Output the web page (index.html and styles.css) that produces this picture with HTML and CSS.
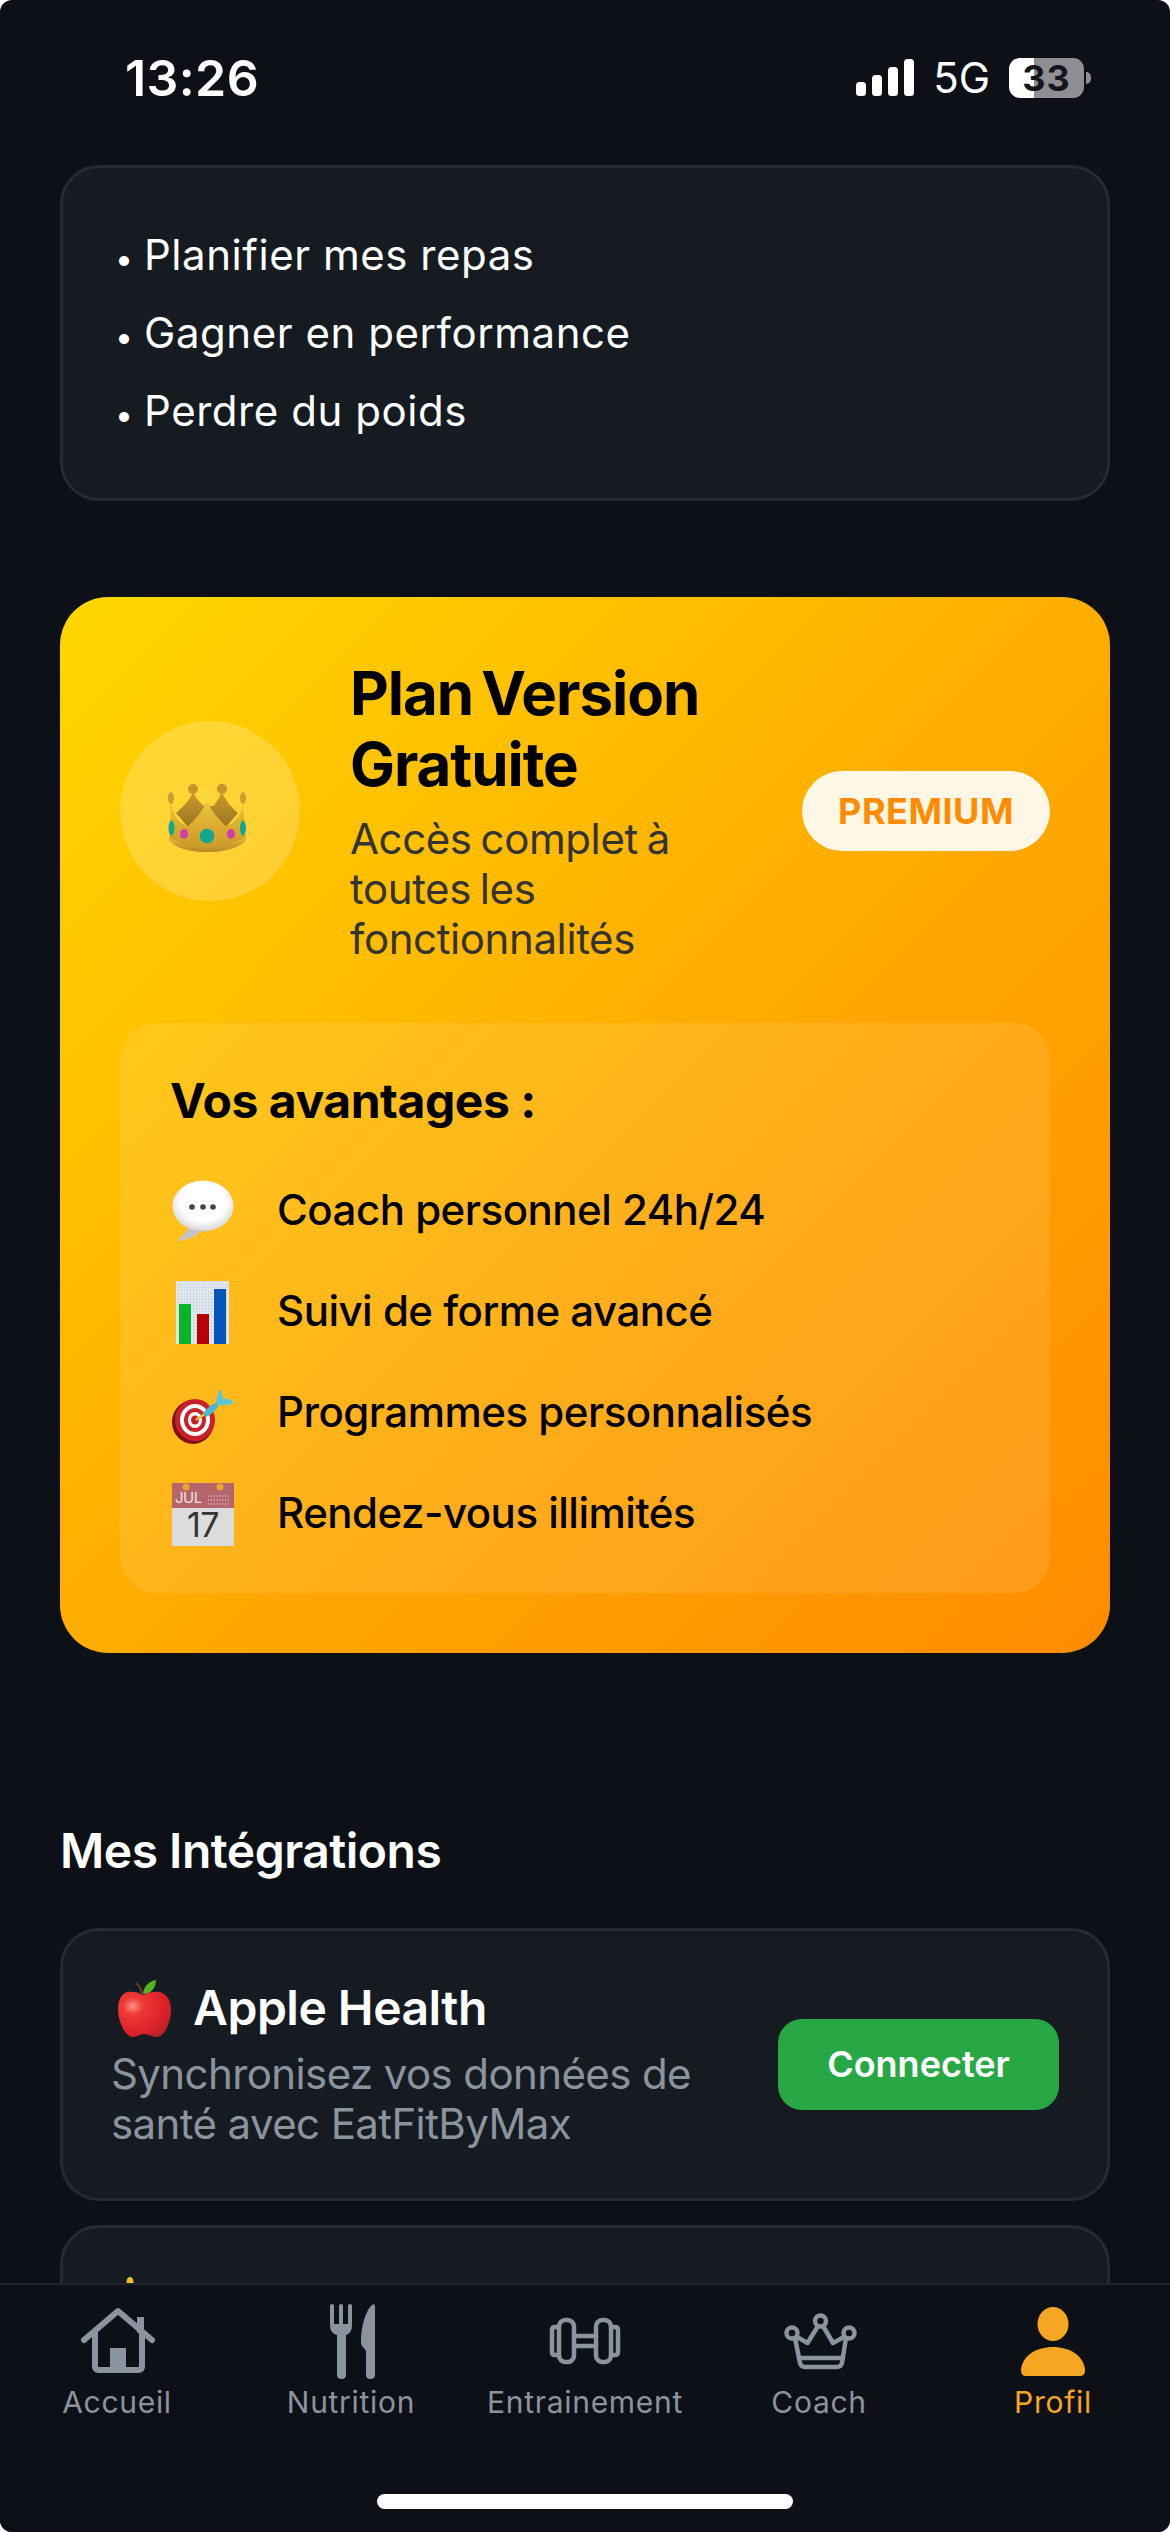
FILE: index.html
```html
<!DOCTYPE html>
<html lang="fr">
<head>
<meta charset="utf-8">
<title>Profil</title>
<link rel="stylesheet" href="styles.css">
</head>
<body>
<div class="app">
  <header class="status">
    <span class="time">13:26</span>
    <div class="status-right">
      <svg class="signal" viewBox="0 0 58 37"><rect x="0" y="23" width="10" height="14" rx="3.5"/><rect x="16" y="16" width="10" height="21" rx="3.5"/><rect x="32" y="8" width="10" height="29" rx="3.5"/><rect x="48" y="0" width="10" height="37" rx="3.5"/></svg>
      <span class="net">5G</span>
      <div class="battery"><div class="battery-body">33</div><div class="battery-tip"></div></div>
    </div>
  </header>

  <main class="content">
    <section class="card goals">
      <p><span class="dot">•</span>Planifier mes repas</p>
      <p><span class="dot">•</span>Gagner en performance</p>
      <p><span class="dot">•</span>Perdre du poids</p>
    </section>

    <section class="premium">
      <div class="plan-head">
        <div class="plan-icon">
          <svg class="emoji-crown" viewBox="0 0 80 68">
            <defs>
              <linearGradient id="cg" x1="0" y1="0" x2="0" y2="1"><stop offset="0" stop-color="#edc53c"/><stop offset=".55" stop-color="#d9a92e"/><stop offset="1" stop-color="#c9982a"/></linearGradient>
              <linearGradient id="cb" x1="0" y1="0" x2="0" y2="1"><stop offset="0" stop-color="#c99a2c"/><stop offset="1" stop-color="#9c7524"/></linearGradient>
              <linearGradient id="cr" x1="0" y1="0" x2="0" y2="1"><stop offset="0" stop-color="#e6bb38"/><stop offset="1" stop-color="#b68a22"/></linearGradient>
            </defs>
            <path fill="url(#cb)" d="M8 29 C14 24 22 16 25 8 C28 14 31 18 36 22 L46 22 C48 18 51 14 54 8 C57 16 64 24 70 29 L58 43 L20 43Z"/>
            <circle cx="25" cy="5" r="5" fill="#c4962c"/><circle cx="54" cy="5" r="5" fill="#c4962c"/>
            <path fill="url(#cg)" d="M3 19 C4 25 5 28 7 31 C10 37 15 41 20 42 C27 36 34 28 39 17 C44 28 51 36 58 42 C63 41 68 37 71 31 C73 28 74 25 75 19 L77 49 L78 55 C76 62 58 68 39 68 C20 68 3 62 1 55 L2 49Z"/>
            <path fill="url(#cr)" d="M1 53 C10 59 25 63 39 63 C53 63 68 59 78 53 L78 55 C76 62 58 68 39 68 C20 68 3 62 1 55Z"/>
            <circle cx="39" cy="13" r="6.5" fill="#f4d83e"/>
            <ellipse cx="3" cy="14" rx="3" ry="6" fill="#c9a02e"/><ellipse cx="75" cy="14" rx="3" ry="6" fill="#c9a02e"/>
            <circle cx="39" cy="52" r="7.3" fill="#13a78f"/>
            <ellipse cx="16" cy="50" rx="4" ry="5" fill="#d13fae"/><ellipse cx="63" cy="50" rx="4" ry="5" fill="#d13fae"/>
            <ellipse cx="3.5" cy="44" rx="3" ry="7.5" fill="#13a78f"/><ellipse cx="75" cy="44" rx="3" ry="7.5" fill="#13a78f"/>
          </svg>
        </div>
        <div class="plan-text">
          <h2 class="plan-title">Plan Version Gratuite</h2>
          <p class="plan-sub">Accès complet à toutes les fonctionnalités</p>
        </div>
        <span class="badge">PREMIUM</span>
      </div>

      <div class="perks">
        <h3 class="perks-title">Vos avantages :</h3>
        <div class="perk">
          <span class="perk-icon">
            <svg class="emoji-perk" viewBox="0 0 62 63">
              <defs><radialGradient id="bub" cx=".5" cy=".42" r=".62"><stop offset=".6" stop-color="#ffffff"/><stop offset=".88" stop-color="#dedede"/><stop offset="1" stop-color="#a9a9a9"/></radialGradient></defs>
              <path fill="#c4c4c4" d="M18 46 C14 52 10 56 5 61 C12 61 24 57 30 50Z"/>
              <ellipse cx="31" cy="26" rx="30.5" ry="25.5" fill="url(#bub)"/>
              <circle cx="20" cy="27" r="2.8" fill="#444"/><circle cx="31" cy="27" r="2.8" fill="#444"/><circle cx="41" cy="27" r="2.8" fill="#444"/>
            </svg>
          </span>
          <span>Coach personnel 24h/24</span>
        </div>
        <div class="perk">
          <span class="perk-icon">
            <svg class="emoji-perk" viewBox="0 0 62 63">
              <defs><pattern id="grid" width="3" height="3" patternUnits="userSpaceOnUse"><rect width="3" height="3" fill="#e4eaf0"/><path d="M0 0H3M0 0V3" stroke="#b6cbe0" stroke-width=".7"/></pattern></defs>
              <rect x="4" y="0" width="53" height="63" fill="url(#grid)"/>
              <rect x="7" y="23" width="12" height="40" fill="#08b52a"/>
              <rect x="25" y="33" width="12" height="30" fill="#b80202"/>
              <rect x="42" y="8" width="12" height="55" fill="#0556ba"/>
            </svg>
          </span>
          <span>Suivi de forme avancé</span>
        </div>
        <div class="perk">
          <span class="perk-icon">
            <svg class="emoji-perk emoji-dart" viewBox="0 -7 62 63">
              <ellipse cx="21" cy="33" rx="21" ry="22" fill="#7d1212"/>
              <ellipse cx="23" cy="31" rx="20" ry="21" fill="#c9202a"/>
              <ellipse cx="23" cy="31" rx="15" ry="16" fill="#fff"/>
              <ellipse cx="23" cy="31" rx="11" ry="12" fill="#c9202a"/>
              <ellipse cx="23" cy="31" rx="7" ry="8" fill="#fff"/>
              <ellipse cx="23" cy="31" rx="4" ry="4.5" fill="#c9202a"/>
              <path d="M24 31 L34 24" stroke="#e8c22a" stroke-width="2.5"/>
              <path fill="#48b8cf" d="M31 25 C34 19 40 15 47 13 C47 18 42 24 34 28Z"/>
              <path fill="#5ac6da" d="M44 14 C44 9 46 4 49 0 C51 4 50 7 51 10 C55 9 59 10 62 13 C58 17 53 16 47 16Z"/>
            </svg>
          </span>
          <span>Programmes personnalisés</span>
        </div>
        <div class="perk">
          <span class="perk-icon">
            <svg class="emoji-perk" viewBox="0 0 62 63">
              <rect y="25" width="62" height="38" fill="#dcdcdc"/>
              <rect width="62" height="25" fill="#b4666c"/>
              <circle cx="14" cy="4" r="3.5" fill="#f0a32a"/><circle cx="48" cy="4" r="3.5" fill="#f0a32a"/>
              <text class="cal-month" x="3" y="20">JUL</text>
              <text class="cal-day" x="31" y="54">17</text>
              <path d="M36 13H58M36 17H58M36 21H58" stroke="#caa0a2" stroke-width="2" stroke-dasharray="1.2 1.6"/>
            </svg>
          </span>
          <span>Rendez-vous illimités</span>
        </div>
      </div>
    </section>

    <h2 class="section-title">Mes Intégrations</h2>

    <section class="card integration">
      <div class="integration-text">
        <div class="integration-name">
          <svg class="emoji-apple" viewBox="0 0 56 58">
            <defs><radialGradient id="ap" cx=".28" cy=".32" r=".85"><stop offset="0" stop-color="#ff9088"/><stop offset=".22" stop-color="#ef3a36"/><stop offset=".75" stop-color="#d91f27"/><stop offset="1" stop-color="#a8262c"/></radialGradient></defs>
            <path fill="url(#ap)" d="M27 16 C22 13 16 12 11 13 C5 15 2 22 2 30 C2 42 9 58 17 58 C21 58 24 55 28 55 C32 55 36 58 41 58 C49 58 55 42 55 30 C55 22 51 15 44 13 C38 12 32 13 27 16Z"/>
            <path d="M26 15 C25 10 23 6 20 4" fill="none" stroke="#6e3a26" stroke-width="2"/>
            <path fill="#55b024" d="M27 15 C27 8 33 2 40 1 C40 9 35 15 27 15Z"/>
          </svg>
          <span>Apple Health</span>
        </div>
        <p class="integration-desc">Synchronisez vos données de santé avec EatFitByMax</p>
      </div>
      <button class="connect">Connecter</button>
    </section>

    <section class="card integration next">
      <div class="integration-text">
        <div class="integration-name">
          <svg class="emoji-apple" viewBox="0 0 56 58"><ellipse cx="14" cy="6" rx="3.5" ry="5" fill="#fdb92c"/></svg>
        </div>
      </div>
    </section>
  </main>

  <footer class="tabbar">
    <nav class="tabs">
      <div class="tab">
        <svg class="tab-icon" viewBox="0 0 96 84">
          <path class="st" d="M15 40 L49 11 L83 40"/>
          <path class="st" d="M26 32 V66 Q26 70 30 70 H69 Q73 70 73 66 V32"/>
          <rect class="fl" x="41" y="48" width="16" height="24"/>
          <rect class="fl" x="68" y="17" width="7" height="16"/>
        </svg>
        <span>Accueil</span>
      </div>
      <div class="tab">
        <svg class="tab-icon" viewBox="0 0 96 84">
          <path class="fl" d="M27 6 Q27 4 29 4 Q31 4 31 6 V24 H36 V6 Q36 4 38 4 Q40 4 40 6 V24 H45 V6 Q45 4 47 4 Q49 4 49 6 V25 Q49 33 43 35 V75 Q43 79 38.5 79 Q34 79 34 75 V35 Q27 33 27 25Z"/>
          <path class="fl" d="M72 6 V75 Q72 79 67.5 79 Q63 79 63 75 V52 Q63 50 61 48 Q58 46 58 42 C58 24 64 9 69 5 Q72 3 72 6Z"/>
        </svg>
        <span>Nutrition</span>
      </div>
      <div class="tab">
        <svg class="tab-icon" viewBox="0 0 96 84">
          <g class="st thin">
            <path d="M22 27 H18 Q15 27 15 30 V52 Q15 55 18 55 H22"/>
            <rect x="22" y="20" width="15" height="42" rx="6.5"/>
            <path d="M37 36 H59 M37 46 H59"/>
            <rect x="59" y="20" width="15" height="42" rx="6.5"/>
            <path d="M74 27 H78 Q81 27 81 30 V52 Q81 55 78 55 H74"/>
          </g>
        </svg>
        <span>Entrainement</span>
      </div>
      <div class="tab">
        <svg class="tab-icon" viewBox="0 0 96 84">
          <g class="st thin">
            <circle cx="49.5" cy="21" r="5.5"/><circle cx="21" cy="33" r="5.5"/><circle cx="78" cy="33" r="5.5"/>
            <path d="M26 37 L36.5 43 L47 26 M52 26 L62 43 L73 37"/>
            <path d="M24 38 L29 63 Q30 67 34 67 H66 Q70 67 71 63 L75 38"/>
            <path d="M28 58 H72"/>
          </g>
        </svg>
        <span>Coach</span>
      </div>
      <div class="tab active">
        <svg class="tab-icon" viewBox="0 0 96 84">
          <ellipse class="fl" cx="48" cy="24" rx="15.5" ry="17"/>
          <path class="fl" d="M16 70 C17 56 31 47 48 47 C65 47 79 56 80 70 Q80 76 75 76 H21 Q16 76 16 70Z"/>
        </svg>
        <span>Profil</span>
      </div>
    </nav>
    <div class="home-bar"></div>
  </footer>
</div>
</body>
</html>
```

FILE: styles.css
```css
* { box-sizing: border-box; margin: 0; padding: 0; }
html, body { width: 1170px; height: 2532px; background: #fff; overflow: hidden; }
body { font-family: Inter, "Noto Sans", sans-serif; color: #fff; }

.app {
  width: 1170px; height: 2532px; display: flex; flex-direction: column;
  background: #0d1117; border-radius: 12px; overflow: hidden;
}

/* status bar */
.status {
  flex: none; height: 165px; padding: 0 79px 10px 125px;
  display: flex; align-items: center; justify-content: space-between;
}
.time { font-size: 50px; font-weight: 600; letter-spacing: .4px; }
.status-right { display: flex; align-items: center; gap: 19px; }
.signal { width: 58px; height: 37px; fill: #fff; }
.net { font-size: 42px; font-weight: 400; }
.battery { display: flex; align-items: center; gap: 2px; }
.battery-body {
  width: 75px; height: 40px; border-radius: 11px;
  background: linear-gradient(90deg, #fff 0 25px, #8e8e93 25px);
  color: #14161c; font-size: 36px; font-weight: 700; line-height: 40px; letter-spacing: 1px; text-align: center;
}
.battery-tip { width: 5px; height: 12px; background: #8e8e93; border-radius: 0 6px 6px 0; }

/* scrolling content */
.content { flex: 1; min-height: 0; overflow: hidden; padding: 0 60px; }
.card { background: #161b22; border: 3px solid #262b33; border-radius: 39px; }
.goals { padding: 48px 52px; font-size: 42px; line-height: 78px; letter-spacing: .55px; }
.dot { display: inline-block; width: 29px; font-size: 32px; line-height: 1; letter-spacing: 0; }

/* premium */
.premium {
  margin-top: 96px; padding: 60px; border-radius: 48px;
  background: linear-gradient(135deg, #ffd700 0%, #ffa500 60%, #ff8c00 100%);
  color: #000;
}
.plan-head { display: flex; align-items: center; margin-bottom: 58px; }
.plan-icon {
  flex: none; width: 180px; height: 180px; border-radius: 50%;
  background: rgba(255, 255, 255, .2); margin-right: 50px;
  display: flex; align-items: center; justify-content: center;
}
.emoji-crown { width: 80px; height: 68px; margin: 14px 4px 0 0; }
.plan-text { flex: 1; min-width: 0; padding: 1px 60px 1px 0; }
.plan-title { font-size: 60px; font-weight: 700; line-height: 71px; letter-spacing: -1.05px; word-spacing: -5px; }
.plan-sub { margin-top: 14px; font-size: 42px; line-height: 50px; color: #333; letter-spacing: -.4px; word-spacing: -2.5px; }
.badge {
  flex: none; width: 248px; height: 80px; border-radius: 40px;
  background: rgba(255, 255, 255, .9); color: #ff8c00;
  font-size: 36px; font-weight: 700; line-height: 80px; letter-spacing: .5px; text-align: center;
}
.perks { padding: 49px 50px 30px; border-radius: 36px; background: rgba(255, 255, 255, .1); }
.perks-title { font-size: 48px; font-weight: 700; line-height: 58px; margin-bottom: 29px; letter-spacing: -.45px; }
.perk { display: flex; align-items: center; height: 101px; font-size: 42px; font-weight: 500; letter-spacing: -.5px; }
.perk-icon { flex: none; width: 107px; padding-left: 2px; display: flex; }
.emoji-perk { width: 62px; height: 63px; margin-top: 3px; }
.cal-month { font: 400 15px Inter, sans-serif; fill: #f0e0e0; }
.cal-day { font: 400 34px Inter, sans-serif; fill: #333; text-anchor: middle; }

/* integrations */
.section-title { margin-top: 169px; font-size: 48px; font-weight: 600; line-height: 58px; letter-spacing: -.5px; }
.integration { margin-top: 48px; padding: 48px 48px 49px; display: flex; align-items: center; gap: 40px; }
.integration.next { margin-top: 24px; }
.integration-text { flex: 1; min-width: 0; }
.integration-name { display: flex; align-items: center; gap: 21px; font-size: 48px; font-weight: 600; line-height: 58px; padding-left: 5px; letter-spacing: -.5px; }
.emoji-apple { flex: none; width: 56px; height: 58px; }
.integration-desc { margin-top: 12px; font-size: 42px; line-height: 50px; color: #8b949e; letter-spacing: -.6px; }
.connect {
  flex: none; width: 281px; height: 91px; border: 0; border-radius: 24px;
  background: #28a745; color: #fff; font: 600 36px Inter, sans-serif;
}

/* tab bar */
.tabbar { flex: none; height: 249px; background: #0d1117; border-top: 2px solid #21262d; padding-top: 15px; display: flex; flex-direction: column; }
.tabs { display: grid; grid-template-columns: repeat(5, 1fr); }
.tab { display: flex; flex-direction: column; align-items: center; font-size: 30px; line-height: 36px; letter-spacing: .7px; color: #8b949e; }
.tab-icon { width: 96px; height: 84px; fill: #8b949e; stroke: #8b949e; stroke-width: 0; }
.tab.active { color: #f5a623; }
.tab.active .tab-icon { fill: #f5a623; }
.st { fill: none; stroke-width: 6; stroke-linecap: round; stroke-linejoin: round; }
.st.thin { stroke-width: 4.5; }
.home-bar { width: 416px; height: 15px; margin: 74px auto 0; border-radius: 8px; background: #fff; }
```
